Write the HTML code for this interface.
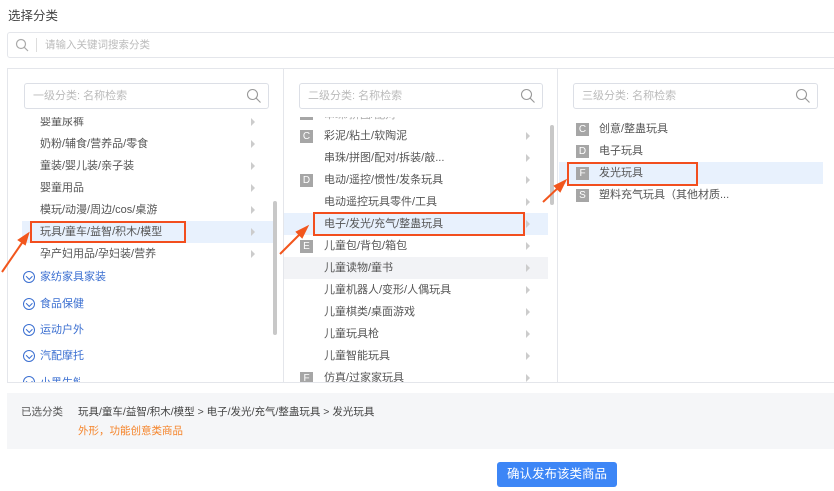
<!DOCTYPE html><html><head><meta charset="utf-8"><style>
*{margin:0;padding:0;box-sizing:border-box}
body{width:834px;height:491px;background:#fff;font-family:"Liberation Sans","Noto Sans CJK SC",sans-serif;font-size:11px;color:#555;position:relative;overflow:hidden}
.a{position:absolute}
.t{white-space:nowrap;line-height:16px}
.sb{border:1px solid #dcdfe6;border-radius:3px;background:#fff;color:#bbb;font-size:11px;padding-left:8px;line-height:24px}
.bd{position:absolute;width:13px;height:13px;background:#a6a6a6;color:#fff;font-size:10px;line-height:13px;text-align:center}
.ar{position:absolute;width:0;height:0;border-left:4px solid #ccc;border-top:4px solid transparent;border-bottom:4px solid transparent}
.blue{color:#3b6fd1}
.ci{position:absolute;width:12px;height:12px;border:1.3px solid #3b6fd1;border-radius:50%}
.ci:after{content:"";position:absolute;left:2.5px;top:1.5px;width:3.5px;height:3.5px;border-right:1.3px solid #3b6fd1;border-bottom:1.3px solid #3b6fd1;transform:rotate(45deg)}
.box{position:absolute;border:2px solid #f24e1e}
</style></head><body>
<div class="a t" style="left:8px;top:8px;font-size:12.5px;color:#444">选择分类</div>
<div class="a" style="left:7px;top:32px;width:830px;height:26px;border:1px solid #e4e6eb;border-radius:3px"></div>
<svg class="a" style="left:15px;top:38px" width="14" height="14"><circle cx="6" cy="6" r="4.5" fill="none" stroke="#aaa" stroke-width="1.2"/><path d="M9.3 9.3L13 13" stroke="#aaa" stroke-width="1.2"/></svg>
<div class="a" style="left:36px;top:38px;width:1px;height:14px;background:#ddd"></div>
<div class="a t" style="left:45px;top:37px;font-size:10.5px;color:#bbb">请输入关键词搜索分类</div>
<div class="a" style="left:7px;top:68px;width:830px;height:315px;border:1px solid #e4e6eb"></div>
<div class="a" style="left:283px;top:69px;width:1px;height:313px;background:#e4e6eb"></div>
<div class="a" style="left:557px;top:69px;width:1px;height:313px;background:#e4e6eb"></div>
<!-- col1 -->
<div class="a sb" style="left:24px;top:83px;width:245px;height:26px">一级分类: 名称检索</div>
<svg class="a" style="left:246px;top:88px" width="16" height="16"><circle cx="6.5" cy="6.5" r="5" fill="none" stroke="#999" stroke-width="1.1"/><path d="M10.2 10.2L14.5 14.5" stroke="#999" stroke-width="1.1"/></svg>
<div class="a" style="left:22px;top:221px;width:251px;height:22px;background:#e8f1fd"></div>
<div class="a" style="left:273px;top:201px;width:4px;height:134px;background:#c8c8c8;border-radius:2px"></div>
<div class="a t" style="left:40px;top:114px;clip-path:inset(3px 0 0 0)">婴童尿裤</div>
<div class="a t" style="left:40px;top:136px">奶粉/辅食/营养品/零食</div>
<div class="a t" style="left:40px;top:158px">童装/婴儿装/亲子装</div>
<div class="a t" style="left:40px;top:180px">婴童用品</div>
<div class="a t" style="left:40px;top:202px">模玩/动漫/周边/cos/桌游</div>
<div class="a t" style="left:40px;top:224px">玩具/童车/益智/积木/模型</div>
<div class="a t" style="left:40px;top:246px">孕产妇用品/孕妇装/营养</div>
<div class="ar" style="left:251px;top:118px"></div><div class="ar" style="left:251px;top:140px"></div><div class="ar" style="left:251px;top:162px"></div><div class="ar" style="left:251px;top:184px"></div><div class="ar" style="left:251px;top:206px"></div><div class="ar" style="left:251px;top:228px"></div><div class="ar" style="left:251px;top:250px"></div>
<div class="box" style="left:30px;top:221px;width:156px;height:22px"></div>
<div class="ci" style="left:23px;top:271px"></div><div class="a t blue" style="left:40px;top:269px">家纺家具家装</div>
<div class="ci" style="left:23px;top:298px"></div><div class="a t blue" style="left:40px;top:296px">食品保健</div>
<div class="ci" style="left:23px;top:324px"></div><div class="a t blue" style="left:40px;top:322px">运动户外</div>
<div class="ci" style="left:23px;top:350px"></div><div class="a t blue" style="left:40px;top:348px">汽配摩托</div>
<div class="a" style="left:20px;top:376px;width:60px;height:6px;overflow:hidden"><div class="ci" style="left:3px;top:0"></div><div class="a t blue" style="left:20px;top:-1px">小黑生鲜</div></div>
<!-- col2 -->
<div class="a sb" style="left:299px;top:83px;width:244px;height:26px">二级分类: 名称检索</div>
<svg class="a" style="left:520px;top:88px" width="16" height="16"><circle cx="6.5" cy="6.5" r="5" fill="none" stroke="#999" stroke-width="1.1"/><path d="M10.2 10.2L14.5 14.5" stroke="#999" stroke-width="1.1"/></svg>
<div class="a" style="left:284px;top:213px;width:264px;height:22px;background:#e8f1fd"></div>
<div class="a" style="left:284px;top:257px;width:264px;height:22px;background:#f2f3f6"></div>
<div class="a" style="left:550px;top:125px;width:4px;height:80px;background:#c8c8c8;border-radius:2px"></div>
<div class="a" style="left:300px;top:117px;width:240px;height:3px;overflow:hidden"><div class="bd" style="left:0;top:-10px"></div><div class="a t" style="left:24px;top:-10px;color:#aaa">串珠/拼图/配对</div></div>
<div class="bd" style="left:300px;top:130px">C</div><div class="a t" style="left:324px;top:128px">彩泥/粘土/软陶泥</div>
<div class="a t" style="left:324px;top:150px">串珠/拼图/配对/拆装/敲...</div>
<div class="bd" style="left:300px;top:174px">D</div><div class="a t" style="left:324px;top:172px">电动/遥控/惯性/发条玩具</div>
<div class="a t" style="left:324px;top:194px">电动遥控玩具零件/工具</div>
<div class="a t" style="left:324px;top:216px">电子/发光/充气/整蛊玩具</div>
<div class="bd" style="left:300px;top:240px">E</div><div class="a t" style="left:324px;top:238px">儿童包/背包/箱包</div>
<div class="a t" style="left:324px;top:260px">儿童读物/童书</div>
<div class="a t" style="left:324px;top:282px">儿童机器人/变形/人偶玩具</div>
<div class="a t" style="left:324px;top:304px">儿童棋类/桌面游戏</div>
<div class="a t" style="left:324px;top:326px">儿童玩具枪</div>
<div class="a t" style="left:324px;top:348px">儿童智能玩具</div>
<div class="a" style="left:300px;top:370px;width:200px;height:12px;overflow:hidden"><div class="bd" style="left:0;top:2px">F</div><div class="a t" style="left:24px;top:0">仿真/过家家玩具</div></div>
<div class="ar" style="left:526px;top:132px"></div><div class="ar" style="left:526px;top:154px"></div><div class="ar" style="left:526px;top:176px"></div><div class="ar" style="left:526px;top:198px"></div><div class="ar" style="left:526px;top:220px"></div><div class="ar" style="left:526px;top:242px"></div><div class="ar" style="left:526px;top:264px"></div><div class="ar" style="left:526px;top:286px"></div><div class="ar" style="left:526px;top:308px"></div><div class="ar" style="left:526px;top:330px"></div><div class="ar" style="left:526px;top:352px"></div><div class="ar" style="left:526px;top:374px"></div>
<div class="box" style="left:313px;top:212px;width:212px;height:24px"></div>
<!-- col3 -->
<div class="a sb" style="left:573px;top:83px;width:245px;height:26px">三级分类: 名称检索</div>
<svg class="a" style="left:795px;top:88px" width="16" height="16"><circle cx="6.5" cy="6.5" r="5" fill="none" stroke="#999" stroke-width="1.1"/><path d="M10.2 10.2L14.5 14.5" stroke="#999" stroke-width="1.1"/></svg>
<div class="a" style="left:559px;top:162px;width:264px;height:22px;background:#e8f1fd"></div>
<div class="bd" style="left:576px;top:123px">C</div><div class="a t" style="left:599px;top:121px">创意/整蛊玩具</div>
<div class="bd" style="left:576px;top:145px">D</div><div class="a t" style="left:599px;top:143px">电子玩具</div>
<div class="bd" style="left:576px;top:167px">F</div><div class="a t" style="left:599px;top:165px">发光玩具</div>
<div class="bd" style="left:576px;top:189px">S</div><div class="a t" style="left:599px;top:187px">塑料充气玩具（其他材质...</div>
<div class="box" style="left:567px;top:162px;width:131px;height:24px"></div>
<!-- arrows -->
<svg class="a" style="left:0;top:0" width="834" height="400"><g stroke="#f2561d" stroke-width="2" fill="#f2561d">
<path d="M2 272L24 240" fill="none"/><path d="M28 234L19 240L25 244Z"/>
<path d="M280 254L302 232" fill="none"/><path d="M307 227L297 232L302 237Z"/>
<path d="M543 202L560 186" fill="none"/><path d="M565 181L555 186L560 191Z"/>
</g></svg>
<!-- bottom -->
<div class="a" style="left:7px;top:393px;width:830px;height:56px;background:#f5f6f8"></div>
<div class="a t" style="left:21px;top:404px;font-size:10.5px;color:#555">已选分类</div>
<div class="a t" style="left:78px;top:404px;font-size:10.5px;color:#444">玩具/童车/益智/积木/模型 &gt; 电子/发光/充气/整蛊玩具 &gt; 发光玩具</div>
<div class="a t" style="left:78px;top:423px;font-size:10.5px;color:#f5842a">外形，功能创意类商品</div>
<div class="a" style="left:497px;top:462px;width:120px;height:25px;background:#3d86f6;border-radius:3px;color:#fff;font-size:12.5px;line-height:25px;text-align:center">确认发布该类商品</div>
</body></html>
